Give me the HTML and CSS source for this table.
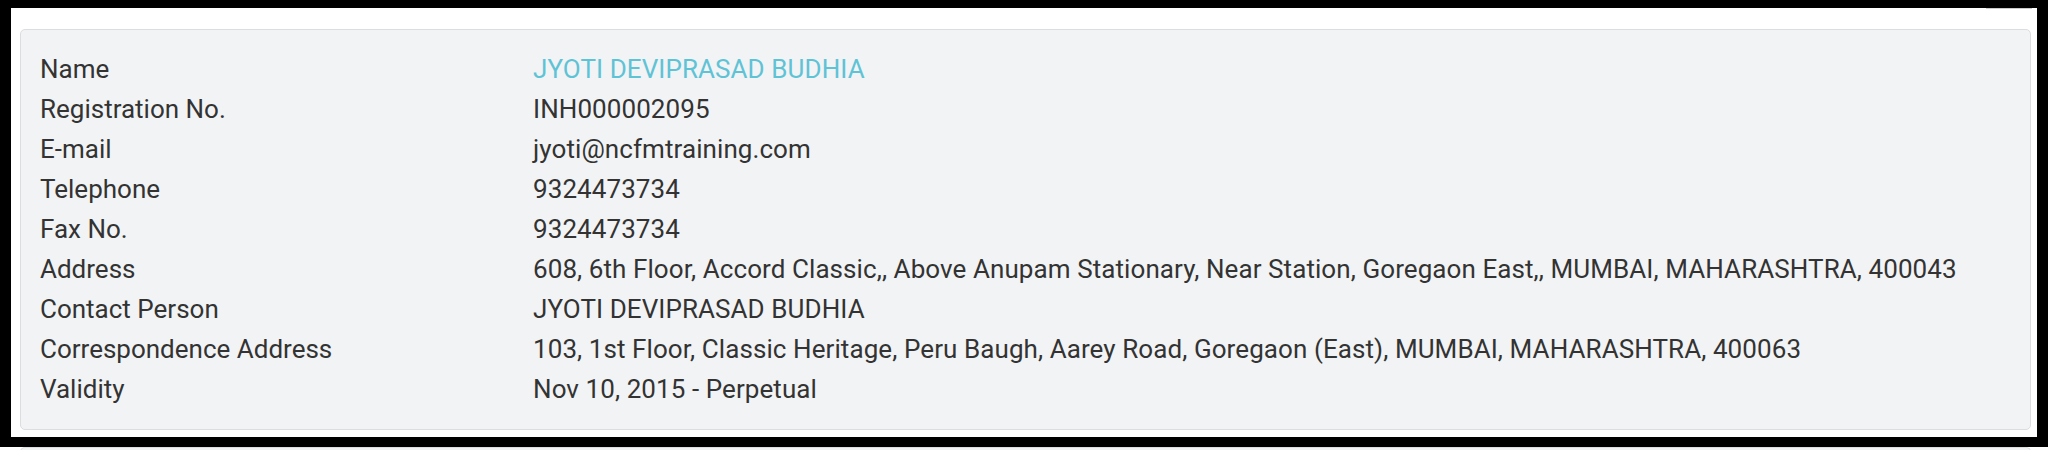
FILE: index.html
```html
<!DOCTYPE html>
<html>
<head>
<meta charset="utf-8">
<link rel="stylesheet" href="styles.css">
</head>
<body>
<div class="frame">
  <div class="tab-edge"></div>
  <div class="card">
    <dl class="details">
      <dt>Name</dt><dd><a class="name-link" href="#">JYOTI DEVIPRASAD BUDHIA</a></dd>
      <dt>Registration No.</dt><dd>INH000002095</dd>
      <dt>E-mail</dt><dd>jyoti@ncfmtraining.com</dd>
      <dt>Telephone</dt><dd>9324473734</dd>
      <dt>Fax No.</dt><dd>9324473734</dd>
      <dt>Address</dt><dd>608, 6th Floor, Accord Classic,, Above Anupam Stationary, Near Station, Goregaon East,, MUMBAI, MAHARASHTRA, 400043</dd>
      <dt>Contact Person</dt><dd>JYOTI DEVIPRASAD BUDHIA</dd>
      <dt>Correspondence Address</dt><dd>103, 1st Floor, Classic Heritage, Peru Baugh, Aarey Road, Goregaon (East), MUMBAI, MAHARASHTRA, 400063</dd>
      <dt>Validity</dt><dd>Nov 10, 2015 - Perpetual</dd>
    </dl>
  </div>
</div>
<div class="next-card"></div>
</body>
</html>
```
FILE: styles.css
```css
html, body {
  margin: 0;
  padding: 0;
  background: #ffffff;
}
body {
  font-family: Roboto, "Liberation Sans", Arial, sans-serif;
  color: #333333;
  overflow: hidden;
}
.frame {
  position: relative;
  border-style: solid;
  border-color: #000000;
  border-width: 8px 11px 10px 11px;
  background: #ffffff;
  padding: 21px 6px 7px 9px;
}
.tab-edge {
  position: absolute;
  top: 0;
  right: 5px;
  width: 46px;
  height: 1px;
  background: #c9cccf;
}
.card {
  background: #f2f3f5;
  border: 1px solid #dcdde0;
  border-radius: 5px;
  padding: 19px 19px 20px 19px;
}
.details {
  display: grid;
  grid-template-columns: 493px 1fr;
  margin: 0;
  font-size: 26px;
  line-height: 40px;
}
.details dt, .details dd {
  margin: 0;
  white-space: nowrap;
}
.details dd {
  letter-spacing: 0.08px;
}
.name-link {
  color: #5fc3d6;
  text-decoration: none;
}
.next-card {
  margin-left: 20px;
  margin-right: 17px;
  height: 20px;
  border: 1px solid #dcdde0;
  border-bottom: none;
  border-radius: 5px 5px 0 0;
  background: #f2f3f5;
}
```
